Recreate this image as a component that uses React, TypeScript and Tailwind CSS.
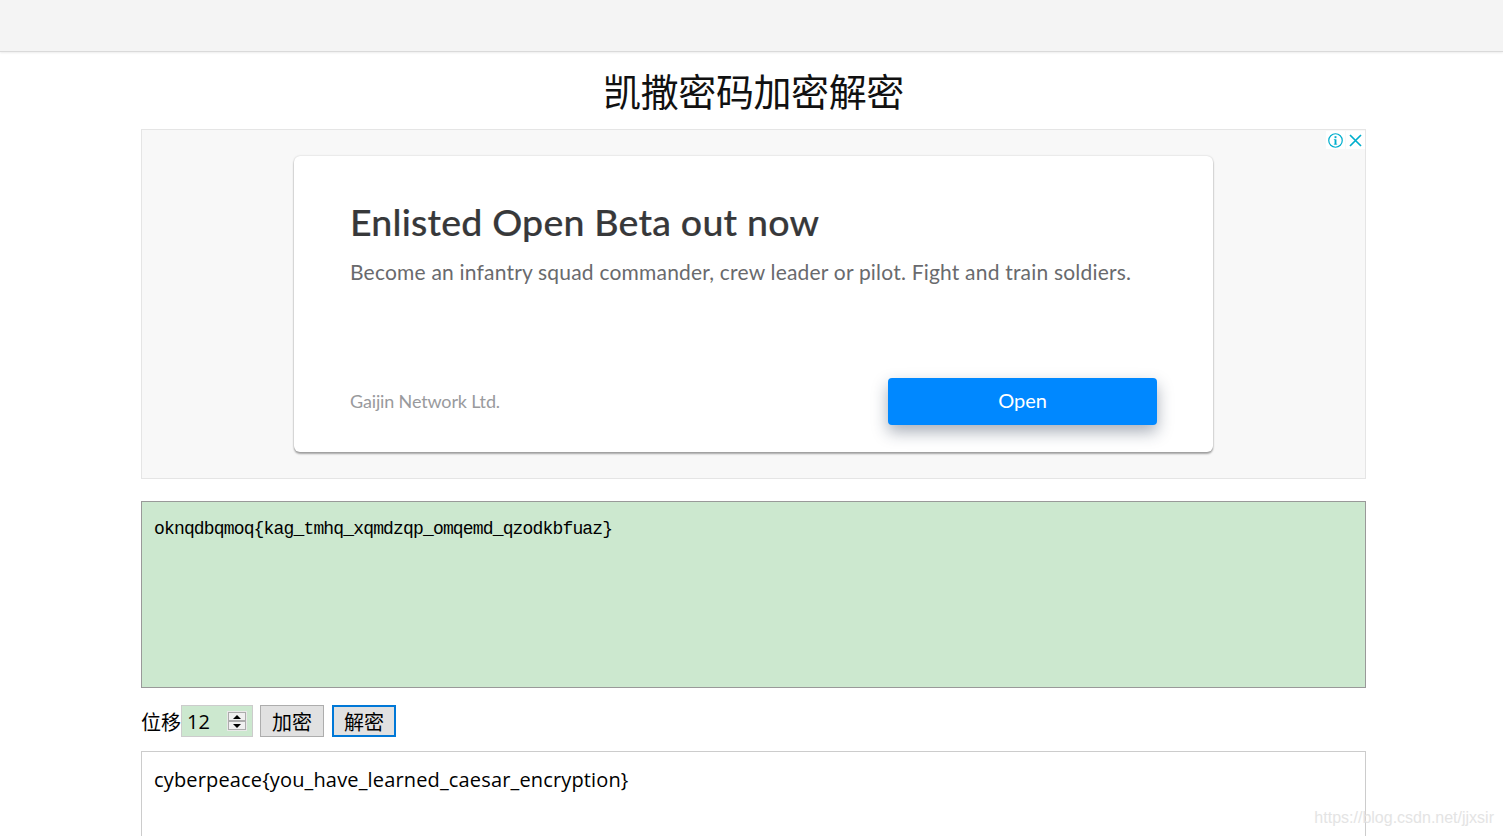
import type { JSX } from "react";

const SHIFT = 12;
const CIPHER_TEXT = "oknqdbqmoq{kag_tmhq_xqmdzqp_omqemd_qzodkbfuaz}";
const PLAIN_TEXT = "cyberpeace{you_have_learned_caesar_encryption}";

function AdBadges(): JSX.Element {
  return (
    <div className="absolute top-px right-0 flex gap-px">
      <span className="flex h-[18px] w-[19px] items-center justify-center bg-white">
        <svg width="15" height="15" viewBox="0 0 16 16" fill="none">
          <circle cx="8" cy="8" r="7.2" stroke="#00aecd" strokeWidth="1.3" />
          <path d="M6.2 7H8M6.2 12H9.8" stroke="#00aecd" strokeWidth="0.7" />
          <rect x="7" y="6.8" width="2" height="5.4" fill="#00aecd" />
          <rect x="7" y="3.4" width="2" height="2.1" fill="#00aecd" />
        </svg>
      </span>
      <span className="flex h-[18px] w-[19px] items-center justify-center bg-white">
        <svg width="13" height="13" viewBox="0 0 13 13" fill="none">
          <path d="M1 1L12 12M12 1L1 12" stroke="#00aecd" strokeWidth="1.7" />
        </svg>
      </span>
    </div>
  );
}

function AdPanel(): JSX.Element {
  return (
    <section className="relative flex h-[350px] justify-center border border-[#e5e5e5] bg-[#f8f8f8] pt-[26px] font-['Lato',sans-serif]">
      <div className="flex h-[296px] w-[919px] flex-col rounded-[6px] bg-white px-[56px] pt-[43px] pb-[27px] shadow-[0_2px_2px_rgba(0,0,0,0.33),0_0_2px_rgba(0,0,0,0.2)]">
        <h2 className="text-[37.5px] leading-[46px] font-medium tracking-[0.2px] whitespace-nowrap text-[#37383a] [-webkit-text-stroke:0.2px_#37383a]">
          Enlisted Open Beta out now
        </h2>
        <p className="mt-[14px] text-[21px] leading-[26px] tracking-[0.2px] whitespace-nowrap text-[#696a6d]">
          Become an infantry squad commander, crew leader or pilot. Fight and train soldiers.
        </p>
        <div className="mt-auto flex items-center justify-between">
          <span className="text-[18px] tracking-[-0.15px] text-[#999a9d]">
            Gaijin Network Ltd.
          </span>
          <button className="h-[47px] w-[269px] rounded-[4px] bg-[#0088ff] pb-[3px] text-[20px] text-white shadow-[0_7px_16px_rgba(30,45,70,0.38)]">
            Open
          </button>
        </div>
      </div>
      <AdBadges />
    </section>
  );
}

function ShiftInput(): JSX.Element {
  return (
    <div className="flex h-[32px] w-[72px] items-center justify-between border border-[#cccccc] bg-[#cce8cf] pr-[5px] pl-[5px]">
      <span className="pt-[2px] text-[20px] leading-[30px]">{SHIFT}</span>
      <div className="flex h-[20px] w-[20px] flex-col border border-[#e9e9e9] bg-[#acacac] p-px">
        <span className="flex flex-1 items-center justify-center bg-[#f0f0f0]">
          <svg width="8" height="4" viewBox="0 0 8 4">
            <path d="M0 4L4 0L8 4Z" fill="#000" />
          </svg>
        </span>
        <span className="mt-[2px] flex flex-1 items-center justify-center bg-[#f0f0f0]">
          <svg width="8" height="4" viewBox="0 0 8 4">
            <path d="M0 0L4 4L8 0Z" fill="#000" />
          </svg>
        </span>
      </div>
    </div>
  );
}

export default function App(): JSX.Element {
  return (
    <div className="relative h-[836px] w-[1503px] overflow-hidden bg-white font-['Noto_Sans','Noto_Sans_CJK_SC',sans-serif] text-[#111111]">
      <header className="h-[52px] border-b border-[#dadada] bg-[#f4f4f4] shadow-[0_1px_2px_rgba(0,0,0,0.08)]" />
      <main className="ml-[141px] w-[1225px]">
        <h1 className="flex h-[77px] items-center justify-center pb-[2px] font-['Noto_Sans_CJK_SC',sans-serif] text-[38px] leading-[50px] font-normal tracking-[-0.4px]">
          凯撒密码加密解密
        </h1>
        <AdPanel />
        <div className="mt-[22px] h-[187px] border border-[#999999] bg-[#cce8cf] px-[12px] pt-[15px] font-['Liberation_Mono',monospace] text-[18px] leading-[24px] tracking-[-0.84px] text-black">
          {CIPHER_TEXT}
        </div>
        <div className="mt-[17px] flex h-[32px] items-center font-['Open_Sans','Noto_Sans_CJK_SC',sans-serif] text-[20px] text-black">
          <label className="pt-[3px]">位移</label>
          <ShiftInput />
          <button className="ml-[7px] h-[32px] w-[64px] border border-[#adadad] bg-[#e1e1e1] pt-[3px] leading-[27px]">
            加密
          </button>
          <button className="ml-[8px] h-[32px] w-[64px] border-2 border-[#0078d7] bg-[#e1e1e1] pt-[3px] leading-[25px]">
            解密
          </button>
        </div>
        <div className="mt-[14px] h-[187px] border border-[#cccccc] bg-white px-[12px] pt-[13px] font-['Open_Sans',sans-serif] text-[20px] leading-[30px] tracking-[0.15px] text-black">
          {PLAIN_TEXT}
        </div>
      </main>
      <span className="absolute right-[9px] bottom-[8px] font-['Liberation_Sans',sans-serif] text-[16px] leading-[20px] text-[#e4e4e4]">
        https://blog.csdn.net/jjxsir
      </span>
    </div>
  );
}
